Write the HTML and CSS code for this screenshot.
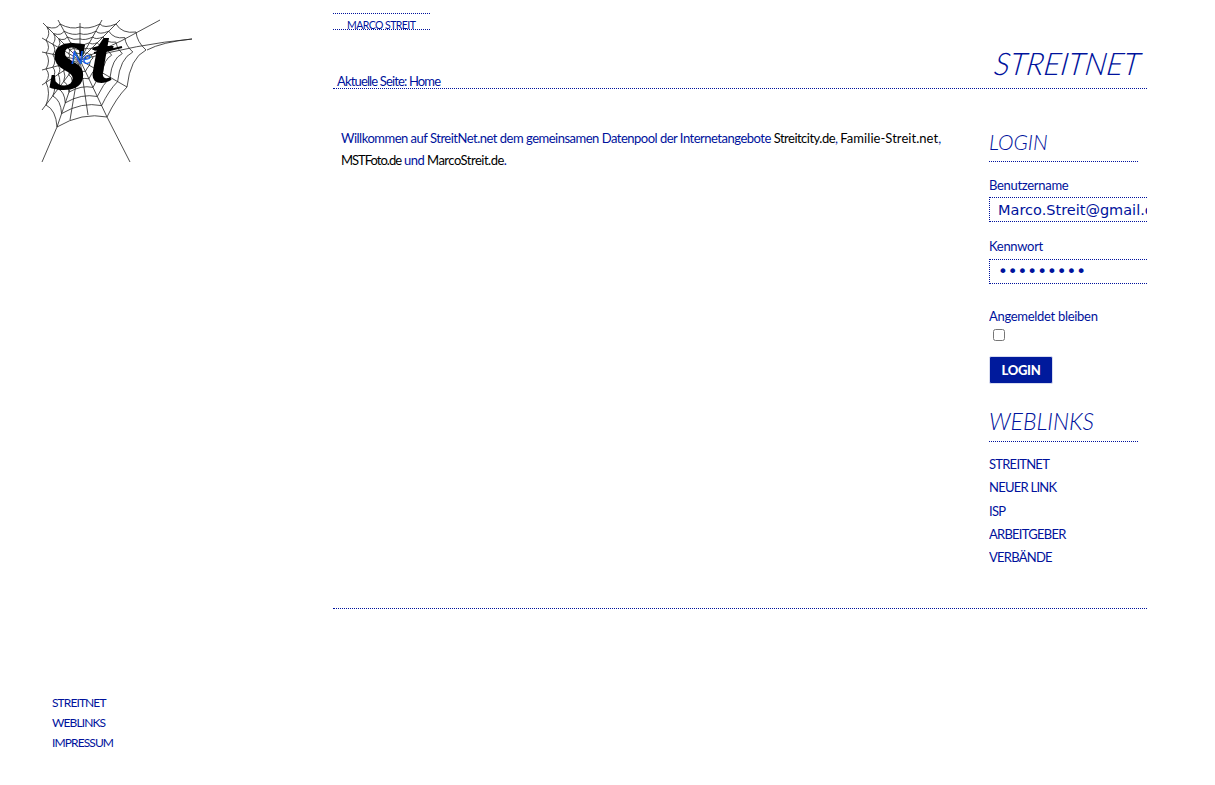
FILE: index.html
```html
<!DOCTYPE html>
<html lang="de">
<head>
<meta charset="utf-8">
<title>StreitNet</title>
<link rel="stylesheet" href="styles.css">
</head>
<body>
<div class="page">
  <aside class="sidebar">
    <svg class="logo" width="150" height="142" viewBox="0 0 150 142" role="img" aria-label="StreitNet Logo">
      <defs>
        <path id="ring" class="ring" d="M15 107Q14 90 4 85Q9 73 4 62Q9 55 4 49Q9 41 4 33Q9 28 4 20Q9 14 5 7Q15 10 18 4Q29 10 38 7Q46 10 58 4Q62 9 74 4Q80 14 94 12Q95 22 104 30Q88 38 85 67Q74 78 65 97Q40 92 15 107"/>
      </defs>
      <g class="thread">
        <path d="M38 40L1 3M38 40L16 0M38 40L38 3M38 40L60 0M38 40L78 0M38 40Q80 22 118 0M38 40Q95 24 150 19M38 40L65 97L88 142M38 40L15 107L0 142M38 40L0 90M38 40L0 65M38 40L0 50M38 40L0 32M38 40L0 18M38 40L28 100M38 40L46 95M38 40L85 67"/>
        <path d="M150 19Q120 22 105 30"/>
        <use href="#ring"/>
        <use href="#ring" transform="translate(38 40) scale(.8) translate(-38 -40)"/>
        <use href="#ring" transform="translate(38 40) scale(.64) translate(-38 -40)"/>
        <use href="#ring" transform="translate(38 40) scale(.48) translate(-38 -40)"/>
        <use href="#ring" transform="translate(38 40) scale(.33) translate(-38 -40)"/>
        <use href="#ring" transform="translate(38 40) scale(.2) translate(-38 -40)"/>
      </g>
      <path class="bar" d="M52 33Q66 31 80 27"/>
      <text class="logo-s" x="8" y="69">s</text>
      <text class="logo-t" x="48" y="62">t</text>
      <text class="logo-ne" x="29" y="44">Ne</text>
    </svg>
    <nav class="foot-nav">
      <a href="#">STREITNET</a>
      <a href="#">WEBLINKS</a>
      <a href="#">IMPRESSUM</a>
    </nav>
  </aside>

  <main class="main">
    <div class="author"><a href="#">MARCO STREIT</a></div>
    <header class="head">
      <div class="crumbs">Aktuelle Seite: Home</div>
      <div class="brand">STREITNET</div>
    </header>
    <div class="body-row">
      <section class="content">
        <p>Willkommen auf StreitNet.net dem gemeinsamen Datenpool der Internetangebote <a class="ext" href="#">Streitcity.de</a>, <a class="ext ext-wide" href="#">Familie-Streit.net</a>, <a class="ext ext-tight" href="#">MSTFoto.de</a> und <a class="ext" href="#">MarcoStreit.de</a>.</p>
      </section>
      <aside class="side">
        <h2 class="side-title">LOGIN</h2>
        <form class="login">
          <label class="field-label" for="user">Benutzername</label>
          <input class="field" id="user" type="text" value="Marco.Streit@gmail.com">
          <label class="field-label" for="pass">Kennwort</label>
          <input class="field field-pass" id="pass" type="password" value="streitnet">
          <label class="field-label remember-label" for="remember">Angemeldet bleiben</label>
          <input class="remember" id="remember" type="checkbox">
          <button class="submit" type="button">LOGIN</button>
        </form>
        <h2 class="side-title links-title">WEBLINKS</h2>
        <ul class="links">
          <li><a href="#">STREITNET</a></li>
          <li><a href="#">NEUER LINK</a></li>
          <li><a href="#">ISP</a></li>
          <li><a href="#">ARBEITGEBER</a></li>
          <li><a href="#">VERBÄNDE</a></li>
        </ul>
      </aside>
    </div>
  </main>
</div>
</body>
</html>
```

FILE: styles.css
```css
* { box-sizing: border-box; }
html, body { margin: 0; padding: 0; }
body {
  background: #fff;
  color: #00129c;
  font-family: "Lato", "Noto Sans", sans-serif;
  font-size: 13px;
}
a { color: inherit; text-decoration: none; }
.page { display: flex; width: 1215px; height: 785px; overflow: hidden; }

.sidebar {
  width: 333px;
  flex: none;
  padding: 20px 0 0 42px;
  display: flex;
  flex-direction: column;
}
.logo { display: block; overflow: visible; }
.thread { fill: none; stroke: #222; stroke-width: .8; }
.thread path, .ring { vector-effect: non-scaling-stroke; }
.bar { fill: none; stroke: #000; stroke-width: 2; }
.logo-s { font-family: "Liberation Serif", serif; font-style: italic; font-weight: bold; font-size: 98px; fill: #000; }
.logo-t { font-family: "Liberation Serif", serif; font-style: italic; font-weight: bold; font-size: 78px; fill: #000; }
.logo-ne { font-family: "Lato", sans-serif; font-style: italic; font-size: 18px; letter-spacing: -1px; fill: #1560e8; }
.foot-nav {
  display: flex;
  flex-direction: column;
  margin: 531px 0 0 10px;
  line-height: 20px;
  font-size: 12px;
  letter-spacing: -.9px;
}

.main { width: 814px; flex: none; }
.author {
  width: 97px;
  height: 17px;
  margin-top: 13px;
  padding-left: 14px;
  border-top: 1px dotted #00129c;
  border-bottom: 1px dotted #00129c;
  font-size: 10.5px;
  letter-spacing: -.55px;
  line-height: 22px;
}
.head {
  height: 59px;
  display: flex;
  justify-content: space-between;
  align-items: flex-end;
  padding: 0 7px 0 4px;
  border-bottom: 1px dotted #00129c;
}
.crumbs { font-size: 13px; letter-spacing: -.85px; line-height: 14px; }
.brand {
  font-size: 31px;
  font-weight: 300;
  font-style: italic;
  line-height: 36px;
  margin-bottom: 7px;
  transform: skewX(-8deg);
}
.body-row {
  display: flex;
  height: 520px;
  border-bottom: 1px dotted #00129c;
}
.content { width: 656px; flex: none; padding: 38px 0 0 8px; }
.content p { margin: 0; font-size: 13px; letter-spacing: -.5px; line-height: 22px; width: 612px; }
.ext { color: #000; }
.ext-wide { letter-spacing: .05px; }
.ext-tight { letter-spacing: -1px; }

.side { width: 158px; flex: none; overflow: hidden; padding-top: 40px; }
.side-title {
  width: 149px;
  margin: 0;
  padding-bottom: 6px;
  border-bottom: 1px dotted #00129c;
  font-size: 21px;
  line-height: 26px;
  font-weight: 300;
  font-style: italic;
}
.login { display: flex; flex-direction: column; align-items: flex-start; padding-top: 14px; }
.field-label { font-size: 13px; letter-spacing: -.3px; line-height: 18px; }
.field {
  width: 180px;
  height: 25px;
  margin: 3px 0 15px;
  padding: 0 8px;
  border: 1px dotted #00129c;
  background: #fff;
  color: #00129c;
  font-family: "DejaVu Sans", sans-serif;
  font-size: 14.5px;
  outline: none;
  flex: none;
}
.field-pass { margin-top: 4px; font-size: 16.6px; }
.remember-label { margin-top: 8px; }
.remember { width: 12px; height: 12px; margin: 4px 0 0 4px; }
.submit {
  width: 64px;
  height: 28px;
  margin-top: 15px;
  border: 1px solid #d8dcf0;
  border-radius: 2px;
  background: #001a9c;
  color: #fff;
  font-family: "Lato", sans-serif;
  font-size: 13px;
  font-weight: 900;
  letter-spacing: -.3px;
  padding: 0;
}
.links-title { margin-top: 24px; padding-bottom: 7px; font-size: 23px; }
.links { list-style: none; margin: 11px 0 0; padding: 0; font-size: 13px; letter-spacing: -.75px; line-height: 23.3px; }
```
